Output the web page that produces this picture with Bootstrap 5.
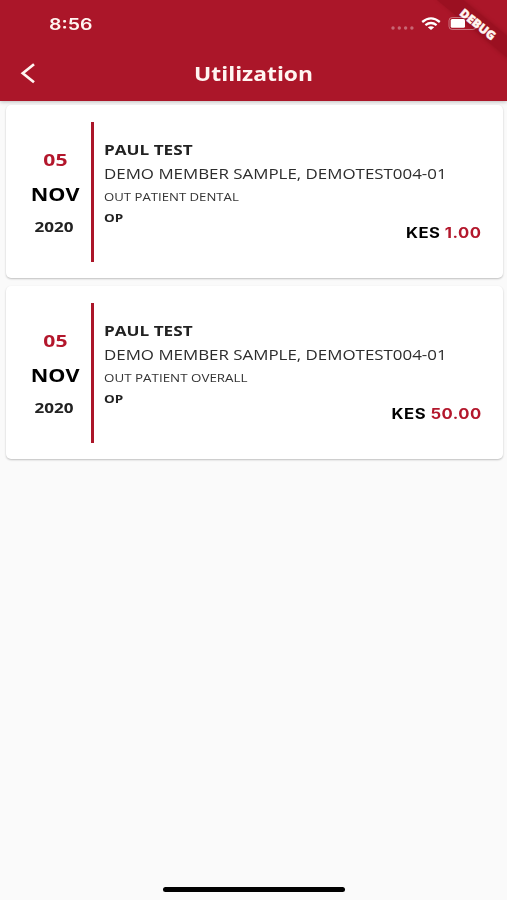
<!DOCTYPE html>
<html lang="en">
<head>
<meta charset="utf-8">
<meta name="viewport" content="width=device-width, initial-scale=1">
<title>Utilization</title>
<link href="https://cdn.jsdelivr.net/npm/bootstrap@5.3.0/dist/css/bootstrap.min.css" rel="stylesheet">
<style>
body{background:#fafafa;font-family:"Open Sans","Noto Sans",sans-serif;color:#222;width:507px;height:900px;overflow:hidden}
.app-header{background:#ab1629;height:101px;box-shadow:0 1px 4px rgba(0,0,0,.25);color:#fff5f1}
.status-row{height:47px;padding-left:49px}
.title-row{height:54px}
.visits{padding-top:4px}
.wide{display:inline-block;white-space:pre;transform-origin:0 50%;transform:scaleX(var(--sx,1.2))}
.ui{font-family:Inter,"Liberation Sans",sans-serif}
.clock{font-size:16px;font-weight:600;--sx:1.22}
.page-title{font-size:19px;font-weight:700;transform-origin:50% 50%}
.visit{height:173px;border:0;border-radius:5px;box-shadow:0 1px 2px rgba(0,0,0,.24);margin:0 4.5px 8px 6px;background:#fff}
.date-col{width:85.4px;padding-top:37px;padding-left:13.6px;line-height:35px;font-weight:700}
.date-col .wide{transform-origin:50% 50%}
.rule{width:2.4px;height:140px;margin-top:16.5px;background:#ab1629}
.day{font-size:16.5px;color:#b3172c;--sx:1.28}
.month{font-size:17px;color:#000;--sx:1.27}
.year{font-size:14px;line-height:30px;margin-right:3px;--sx:1.22}
.detail{padding:33px 21px 0 10.2px}
.who{font-size:13.5px;font-weight:700;line-height:24px;--sx:1.27}
.member{font-size:14px;line-height:24px;color:#2c2c2c;--sx:1.207}
.benefit{font-size:11.3px;line-height:21px;color:#333;--sx:1.165}
.benefit.overall{--sx:1.185}
.kind{font-size:10.8px;font-weight:700;line-height:21px;--sx:1.25}
.amount{font-size:14px;font-weight:700;line-height:20px;margin-top:-5px;color:#000;letter-spacing:.4px}
.amount .wide{transform-origin:100% 50%;--sx:1.19}
.amount b{color:#b3172c;font-weight:700}
.debug-banner{position:absolute;top:0;right:0}
.home-bar{position:absolute;left:163px;top:887px;width:182px;height:5px;border-radius:3px;background:#000}
</style>
<script src="https://cdn.jsdelivr.net/npm/bootstrap@5.3.0/dist/js/bootstrap.bundle.min.js"></script>
</head>
<body class="position-relative">
<header class="app-header position-relative">
  <div class="status-row d-flex align-items-center">
    <span class="wide ui clock">8:56</span>
    <svg class="ms-auto" width="117" height="24" viewBox="390 12 117 24">
      <g fill="#fff" opacity=".35"><circle cx="393" cy="28" r="1.7"/><circle cx="399.3" cy="28" r="1.7"/><circle cx="405.6" cy="28" r="1.7"/><circle cx="411.9" cy="28" r="1.7"/></g>
      <g fill="none" stroke="#fff" stroke-width="2.3"><path d="M422.2 22Q431 14.8 439.8 22"/><path d="M425.4 25.2Q431 20.8 436.6 25.2"/></g>
      <path d="M427.8 27.3Q431 25.1 434.2 27.3L431 30Z" fill="#fff"/>
    </svg>
  </div>
  <div class="title-row d-flex align-items-center justify-content-center position-relative">
    <svg class="position-absolute start-0" width="50" height="30" viewBox="0 59 50 30"><path d="M34 64.3L22.8 73.3L34 82.2" fill="none" stroke="#fff5f1" stroke-width="2.7"/></svg>
    <span class="wide page-title">Utilization</span>
  </div>
  <svg class="debug-banner" width="87" height="70" viewBox="420 0 87 70">
    <defs><filter id="soft" x="-20%" y="-20%" width="140%" height="140%"><feGaussianBlur stdDeviation="2"/></filter></defs>
    <path d="M436 -2H461L509 37V60Z" fill="#500" opacity=".25" filter="url(#soft)"/>
    <path d="M437 0H463L507 36V57Z" fill="#9b1021"/>
    <rect x="449" y="17.5" width="27" height="12" rx="3.2" fill="none" stroke="#fff" stroke-opacity=".4"/>
    <rect x="450.7" y="19" width="14.3" height="8.8" rx="1.5" fill="#fff"/>
    <text transform="translate(477.8 24.4) rotate(38.8)" text-anchor="middle" y="4.3" font-family="Open Sans" font-weight="800" font-size="12" textLength="42" lengthAdjust="spacingAndGlyphs" fill="#fff5f1" stroke="#fff5f1" stroke-width=".4">DEBUG</text>
  </svg>
</header>
<main class="visits">
  <article class="card visit flex-row">
    <div class="date-col d-flex flex-column align-items-center"><span class="wide day">05</span><span class="wide month">NOV</span><span class="wide year">2020</span></div>
    <div class="rule"></div>
    <div class="detail flex-grow-1 d-flex flex-column align-items-start">
      <span class="wide who">PAUL TEST</span><span class="wide member">DEMO MEMBER SAMPLE, DEMOTEST004-01</span><span class="wide benefit">OUT PATIENT DENTAL</span><span class="wide kind">OP</span>
      <div class="amount ui align-self-end"><span class="wide">KES <b>1.00</b></span></div>
    </div>
  </article>
  <article class="card visit flex-row">
    <div class="date-col d-flex flex-column align-items-center"><span class="wide day">05</span><span class="wide month">NOV</span><span class="wide year">2020</span></div>
    <div class="rule"></div>
    <div class="detail flex-grow-1 d-flex flex-column align-items-start">
      <span class="wide who">PAUL TEST</span><span class="wide member">DEMO MEMBER SAMPLE, DEMOTEST004-01</span><span class="wide benefit overall">OUT PATIENT OVERALL</span><span class="wide kind">OP</span>
      <div class="amount ui align-self-end"><span class="wide">KES <b>50.00</b></span></div>
    </div>
  </article>
</main>
<div class="home-bar"></div>
</body>
</html>
